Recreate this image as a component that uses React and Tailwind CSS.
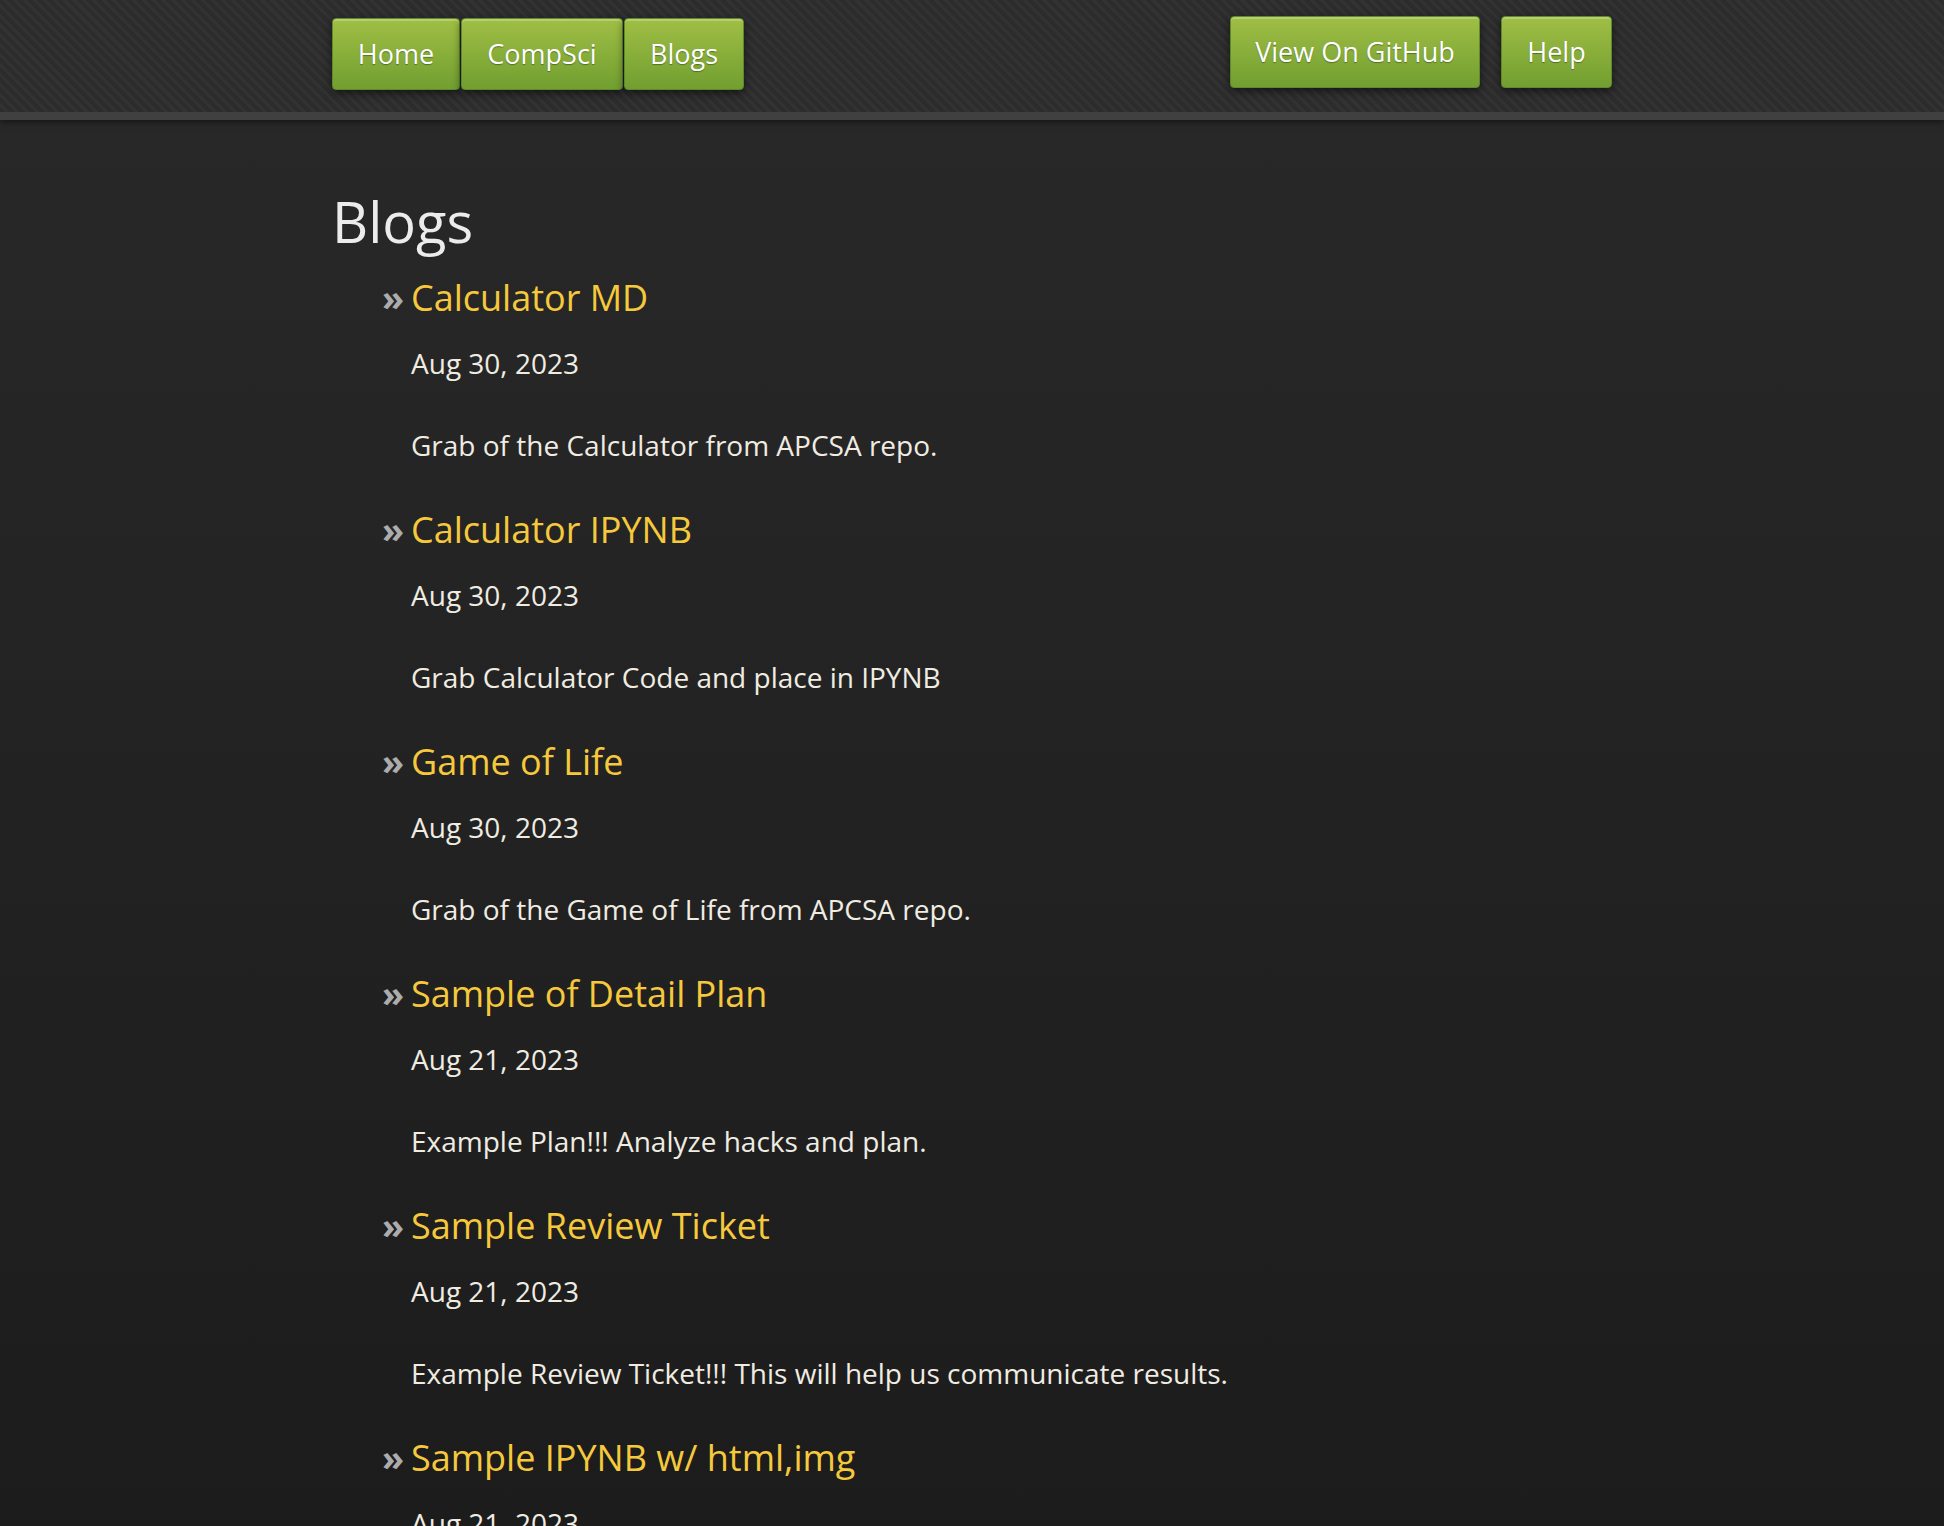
import React from "react";

const posts = [
  { title: "Calculator MD", date: "Aug 30, 2023", desc: "Grab of the Calculator from APCSA repo." },
  { title: "Calculator IPYNB", date: "Aug 30, 2023", desc: "Grab Calculator Code and place in IPYNB" },
  { title: "Game of Life", date: "Aug 30, 2023", desc: "Grab of the Game of Life from APCSA repo." },
  { title: "Sample of Detail Plan", date: "Aug 21, 2023", desc: "Example Plan!!! Analyze hacks and plan." },
  { title: "Sample Review Ticket", date: "Aug 21, 2023", desc: "Example Review Ticket!!! This will help us communicate results." },
  { title: "Sample IPYNB w/ html,img", date: "Aug 21, 2023", desc: "Sample IPYNB with html and image." },
];

const btn =
  "h-[72px] flex items-center justify-center text-[27px] text-white rounded-[4px] border border-[#5e8a29] bg-[linear-gradient(#a0be45,#719f30)] shadow-[inset_0_2px_0_rgba(255,255,255,0.25),0_3px_8px_rgba(0,0,0,0.55)] [text-shadow:0_1px_1px_rgba(0,0,0,0.35)]";

const App = () => {
  return (
    <div className="h-screen overflow-hidden bg-[linear-gradient(#292929,#1c1c1c)] font-['Open_Sans',sans-serif]">
      <header className="h-[120px] border-b-[8px] border-[#404040] bg-[repeating-linear-gradient(45deg,#2c2c2c_0px,#2c2c2c_4px,#323232_4px,#323232_7px)] shadow-[0_2px_6px_rgba(0,0,0,0.5)]">
        <div className="max-w-[1280px] mx-auto flex justify-between">
          <nav className="flex gap-[1px] mt-[18px]">
            <a className={`${btn} w-[128px]`}>Home</a>
            <a className={`${btn} w-[162px]`}>CompSci</a>
            <a className={`${btn} w-[120px]`}>Blogs</a>
          </nav>
          <div className="flex gap-[21px] mt-[16px]">
            <a className={`${btn} w-[250px]`}>View On GitHub</a>
            <a className={`${btn} w-[111px]`}>Help</a>
          </div>
        </div>
      </header>

      <main className="max-w-[1280px] mx-auto pt-[68px]">
        <h1 className="text-[56px] leading-[67px] text-[#ececec]">Blogs</h1>
        <ul className="mt-[21px] pl-[50px]">
          {posts.map((p) => (
            <li key={p.title} className="flex items-baseline mb-[45px]">
              <span className="w-[29px] shrink-0 text-[36px] leading-[44px] font-bold text-[#acacac]">»</span>
              <div>
                <h2 className="text-[36px] leading-[44px] text-[#f6c93c]">{p.title}</h2>
                <p className="mt-[25px] text-[28px] leading-[36px] text-[#f0ece2]">{p.date}</p>
                <p className="mt-[46px] text-[28px] leading-[36px] text-[#f0ece2]">{p.desc}</p>
              </div>
            </li>
          ))}
        </ul>
      </main>
    </div>
  );
};

export default App;
